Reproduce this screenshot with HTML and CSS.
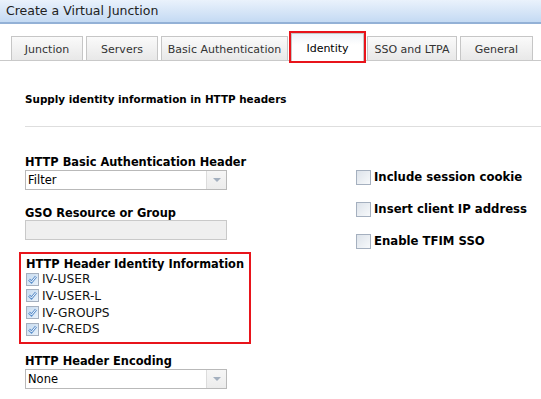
FILE: index.html
```html
<!DOCTYPE html>
<html lang="en">
<head>
<meta charset="UTF-8" />
<title>Create a Virtual Junction</title>
<link rel="stylesheet" href="styles.css">
</head>
<body>
  <div class="titlebar">Create a Virtual Junction</div>

  <div class="tabs">
    <div class="tab tab-junction">Junction</div>
    <div class="tab tab-servers">Servers</div>
    <div class="tab tab-basic">Basic Authentication</div>
    <div class="tab tab-identity active">Identity</div>
    <div class="tab tab-sso">SSO and LTPA</div>
    <div class="tab tab-general">General</div>
  </div>

  <div class="content">
    <h2 class="intro">Supply identity information in HTTP headers</h2>
    <div class="rule"></div>

    <div class="columns">
      <div class="col-left">
        <div class="label">HTTP Basic Authentication Header</div>
        <div class="select">
          <span class="select-value">Filter</span>
          <span class="select-arrow"><span class="tri"></span></span>
        </div>

        <div class="label">GSO Resource or Group</div>
        <div class="input disabled"></div>

        <div class="group">
          <div class="label">HTTP Header Identity Information</div>
          <div class="check-row"><span class="box checked"><svg width="11" height="11" viewBox="0 0 11 11"><path d="M2 5.5 L4.5 8 L9 2.5" fill="none" stroke="#5b8fcb" stroke-width="2.6"/><path d="M2 5.5 L4.5 8 L9 2.5" fill="none" stroke="#fff" stroke-width="1"/></svg></span>IV-USER</div>
          <div class="check-row"><span class="box checked"><svg width="11" height="11" viewBox="0 0 11 11"><path d="M2 5.5 L4.5 8 L9 2.5" fill="none" stroke="#5b8fcb" stroke-width="2.6"/><path d="M2 5.5 L4.5 8 L9 2.5" fill="none" stroke="#fff" stroke-width="1"/></svg></span>IV-USER-L</div>
          <div class="check-row"><span class="box checked"><svg width="11" height="11" viewBox="0 0 11 11"><path d="M2 5.5 L4.5 8 L9 2.5" fill="none" stroke="#5b8fcb" stroke-width="2.6"/><path d="M2 5.5 L4.5 8 L9 2.5" fill="none" stroke="#fff" stroke-width="1"/></svg></span>IV-GROUPS</div>
          <div class="check-row"><span class="box checked"><svg width="11" height="11" viewBox="0 0 11 11"><path d="M2 5.5 L4.5 8 L9 2.5" fill="none" stroke="#5b8fcb" stroke-width="2.6"/><path d="M2 5.5 L4.5 8 L9 2.5" fill="none" stroke="#fff" stroke-width="1"/></svg></span>IV-CREDS</div>
        </div>

        <div class="label label-enc">HTTP Header Encoding</div>
        <div class="select">
          <span class="select-value">None</span>
          <span class="select-arrow"><span class="tri"></span></span>
        </div>
      </div>

      <div class="col-right">
        <div class="opt-row"><span class="box"></span>Include session cookie</div>
        <div class="opt-row"><span class="box"></span>Insert client IP address</div>
        <div class="opt-row"><span class="box"></span>Enable TFIM SSO</div>
      </div>
    </div>
  </div>
</body>
</html>
```

FILE: styles.css
```css
body {
  margin: 0;
  background-color: #fff;
  color: #000;
  font-family: Verdana, 'DejaVu Sans', sans-serif;
  font-size: 11px;
  overflow: hidden;
}
.titlebar {
  height: 22px;
  line-height: 21px;
  padding-left: 6px;
  font-size: 12.5px;
  color: #222;
  background: linear-gradient(to bottom, #eaf2fc, #c4daf3);
  border-bottom: 2px solid #93b1d6;
}
.tabs {
  display: flex;
  align-items: flex-end;
  gap: 3px;
  margin-top: 10px;
  padding-left: 11px;
  height: 26px;
  border-bottom: 1px solid #c9c9c9;
}
.tab {
  box-sizing: border-box;
  height: 24px;
  line-height: 25px;
  text-align: center;
  color: #333;
  border: 1px solid #c6c6c6;
  border-bottom: none;
  background: linear-gradient(to bottom, #fafafa, #e8e8e8);
}
.tab-junction { width: 72px; }
.tab-servers { width: 72px; }
.tab-basic { width: 127px; }
.tab-identity { width: 73px; }
.tab-sso { width: 90px; }
.tab-general { width: 73px; }
.tab.active {
  height: 28px;
  line-height: 30px;
  color: #000;
  background: linear-gradient(to bottom, #eef3f8, #fff 40%);
  margin-bottom: -1px;
  outline: 2px solid #e8141b;
}
.content {
  padding-left: 25px;
}
.intro {
  margin: 0;
  padding-top: 31px;
  font-size: 10.4px;
  line-height: 14px;
  font-weight: bold;
}
.rule {
  margin-top: 20px;
  border-top: 1px solid #dedede;
}
.columns {
  display: grid;
  grid-template-columns: 331px 1fr;
}
.label {
  font-weight: bold;
  font-size: 11.4px;
  line-height: 14px;
  padding-top: 2px;
  margin-top: 14px;
}
.col-left > .label:first-child {
  margin-top: 26px;
}
.select,
.input {
  box-sizing: border-box;
  width: 202px;
  height: 20px;
  border: 1px solid #b9b9b9;
  background-color: #fff;
}
.select {
  margin-top: 1px;
  display: flex;
  justify-content: space-between;
}
.select-value {
  line-height: 18px;
  padding-left: 2px;
  font-size: 11.5px;
}
.select-arrow {
  width: 19px;
  border-left: 1px solid #dcdcdc;
  background: linear-gradient(to bottom, #f6f6f6, #ececec);
  display: flex;
  align-items: center;
  justify-content: center;
}
.tri {
  width: 0;
  height: 0;
  border-left: 4px solid transparent;
  border-right: 4px solid transparent;
  border-top: 4px solid #a4b0bf;
}
.input.disabled {
  background-color: #efefef;
  border-color: #c9c9c9;
}
.group {
  width: 223px;
  margin: 12px 0 0 -6px;
  padding: 2px 0 4px 5px;
  border: 2px solid #e8141b;
}
.group .label {
  margin-top: 0;
  line-height: 13px;
}
.label-enc {
  margin-top: 8px;
}
.check-row {
  display: flex;
  align-items: center;
  height: 16.67px;
  font-size: 12.2px;
  color: #111;
}
.box {
  box-sizing: border-box;
  width: 13px;
  height: 13px;
  margin-right: 3px;
  border: 1px solid #a5b0bf;
  background: linear-gradient(135deg, #dde3ea, #f7f9fb);
  display: inline-flex;
  align-items: center;
  justify-content: center;
  flex-shrink: 0;
}
.box.checked {
  background: linear-gradient(135deg, #c7dbef, #e9f2fb);
}
.box svg {
  display: block;
}
.col-right {
  padding-top: 34px;
}
.opt-row {
  display: flex;
  align-items: center;
  height: 32px;
  font-weight: bold;
  font-size: 11.7px;
}
.opt-row .box {
  width: 15px;
  height: 15px;
  margin-right: 3px;
}
```
